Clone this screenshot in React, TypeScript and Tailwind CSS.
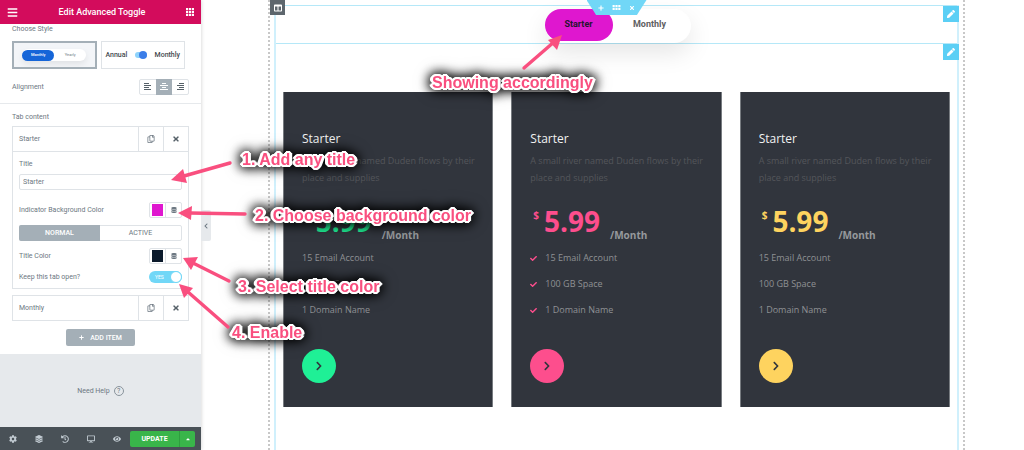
import React from "react";
import {
  FaBars,
  FaCaretUp,
  FaCheck,
  FaChevronLeft,
  FaChevronRight,
  FaCog,
  FaColumns,
  FaDatabase,
  FaDesktop,
  FaEye,
  FaHistory,
  FaLayerGroup,
  FaPen,
  FaPlus,
  FaRegCopy,
  FaTimes,
} from "react-icons/fa";

interface Plan {
  id: number;
  text: string;
  circle: string;
  checked: boolean;
}

const plans: Plan[] = [
  { id: 1, text: "text-[#1ff096]", circle: "bg-[#1ff096]", checked: false },
  { id: 2, text: "text-[#fd4e8d]", circle: "bg-[#fd4e8d]", checked: true },
  { id: 3, text: "text-[#fed35f]", circle: "bg-[#fed35f]", checked: false },
];

const features = ["15 Email Account", "100 GB Space", "1 Domain Name"];

const Dots = ({ rows, className }: { rows: number; className: string }) => (
  <svg viewBox={`0 0 11 ${rows * 4 - 1}`} className={className} fill="currentColor">
    {Array.from({ length: rows * 3 }).map((_, i) => (
      <rect key={i} x={(i % 3) * 4} y={Math.floor(i / 3) * 4} width="3" height="3" />
    ))}
  </svg>
);

const AlignIcon = ({ d }: { d: string }) => (
  <svg viewBox="0 0 8 8" className="size-2" fill="none" stroke="currentColor" strokeWidth="1">
    <path d={d} />
  </svg>
);

const ItemHeader = ({ title }: { title: string }) => (
  <div className="flex h-6 items-stretch">
    <button className="flex-1 pl-1.5 text-left">{title}</button>
    <button className="flex w-[25px] items-center justify-center border-l border-[#dfe3e7]" aria-label="Duplicate">
      <FaRegCopy className="size-2" />
    </button>
    <button className="flex w-[25px] items-center justify-center border-l border-[#dfe3e7]" aria-label="Remove">
      <FaTimes className="size-2 text-[#556068]" />
    </button>
  </div>
);

const ColorControl = ({ label, color }: { label: string; color: string }) => (
  <div className="flex h-4 items-center justify-between">
    <span>{label}</span>
    <div className="flex h-4 w-[33px] rounded-xs border border-[#dfe3e7]">
      <button className="flex flex-1 items-center justify-center" aria-label={label}>
        <span className={`h-3 w-[11px] ${color}`} />
      </button>
      <button className="flex w-4 items-center justify-center border-l border-[#dfe3e7]" aria-label="Global colors">
        <FaDatabase className="size-1.5" />
      </button>
    </div>
  </div>
);

const Panel = () => {
  return (
    <aside className="relative z-10 flex w-[201px] shrink-0 flex-col bg-white text-[7px] leading-[10px] text-[#6d7882] shadow-[0_0_4px_rgba(0,0,0,0.2)]">
      <header className="flex h-6 items-center justify-between bg-[#d30c5c] px-[7px] text-white">
        <button aria-label="Menu">
          <FaBars className="size-[11px]" />
        </button>
        <h1 className="text-[9px] font-medium">Edit Advanced Toggle</h1>
        <button aria-label="Widgets">
          <Dots rows={3} className="size-2" />
        </button>
      </header>

      <div className="border-b border-[#e6e9ec] px-3 pb-2">
        <h2>Choose Style</h2>
        <div className="mt-[7px] grid grid-cols-2 gap-1 pr-1">
          <label className="relative flex h-7 items-center justify-center border border-[#a4afb7] bg-[#f3f5f8] outline-1 -outline-offset-2 outline-[#a4afb7]">
            <input type="radio" name="style" defaultChecked className="sr-only" />
            <span className="flex h-3 w-16 items-center rounded-full bg-white text-[4px] leading-none shadow-[0_3px_6px_rgba(0,0,0,0.08)]">
              <span className="flex h-[11px] w-8 items-center justify-center rounded-full bg-[#1565d8] font-medium text-white">
                Monthly
              </span>
              <span className="flex-1 text-center">Yearly</span>
            </span>
          </label>
          <label className="relative flex h-7 items-center justify-between border border-[#dfe3e7] px-1 font-medium text-[#44494e]">
            <input type="radio" name="style" className="sr-only" />
            <span>Annual</span>
            <span className="flex h-1.5 w-3 items-center justify-end rounded-full bg-[#8fd3fb]">
              <span className="size-2 rounded-full bg-[#3b7de8]" />
            </span>
            <span>Monthly</span>
          </label>
        </div>
        <div className="mt-2.5 flex items-center justify-between">
          <span>Alignment</span>
          <div className="flex h-4 w-[50px] items-stretch rounded-xs border border-[#dfe3e7] text-[#556068]">
            <button className="flex flex-1 items-center justify-center" aria-label="Left">
              <AlignIcon d="M0 .5h5M0 2.5h7M0 4.5h5M0 6.5h7" />
            </button>
            <button className="-my-px flex flex-1 items-center justify-center bg-[#a4afb7] text-white" aria-label="Center">
              <AlignIcon d="M2 .5h4M0 2.5h8M2 4.5h4M0 6.5h8" />
            </button>
            <button className="flex flex-1 items-center justify-center" aria-label="Right">
              <AlignIcon d="M3 .5h5M1 2.5h7M3 4.5h5M1 6.5h7" />
            </button>
          </div>
        </div>
      </div>

      <div className="px-3 pt-2 pb-2">
        <h2>Tab content</h2>
        <div className="mt-1 border border-[#dfe3e7]">
          <ItemHeader title="Starter" />
          <div className="border-t border-[#dfe3e7] px-1.5 pt-[7px] pb-[5px]">
            <label htmlFor="tab-title" className="block">
              Title
            </label>
            <input
              id="tab-title"
              defaultValue="Starter"
              className="mt-[5px] block h-4 w-full rounded-xs border border-[#dfe3e7] px-[3px]"
            />
            <div className="mt-3">
              <ColorControl label="Indicator Background Color" color="bg-[#df17cf]" />
            </div>
            <div className="mt-[7px] flex h-4 rounded-xs border border-[#dfe3e7]">
              <button className="-my-px -ml-px flex-1 rounded-l-xs bg-[#a4afb7] font-medium text-white">NORMAL</button>
              <button className="flex-1">ACTIVE</button>
            </div>
            <div className="mt-[7px]">
              <ColorControl label="Title Color" color="bg-[#0b1a2b]" />
            </div>
            <label className="relative mt-[7px] flex h-3 items-center justify-between">
              <span>Keep this tab open?</span>
              <input type="checkbox" defaultChecked className="sr-only" />
              <span className="flex h-3 w-[33px] items-center justify-between rounded-full bg-[#71d7f7] pl-1.5 text-[5px] text-white">
                YES
                <span className="size-3 rounded-full border border-[#71d7f7] bg-white" />
              </span>
            </label>
          </div>
        </div>
        <div className="mt-1.5 border border-[#dfe3e7]">
          <ItemHeader title="Monthly" />
        </div>
        <button className="mx-auto mt-2 flex h-[17px] w-[69px] items-center justify-center gap-1.5 rounded-xs bg-[#a4afb7] font-medium text-white">
          <FaPlus className="size-[5px]" />
          ADD ITEM
        </button>
      </div>

      <div className="flex flex-1 items-center justify-center bg-[#e6e9ec]">
        <a href="#help" className="flex items-center gap-1">
          Need Help
          <span className="flex size-2.5 items-center justify-center rounded-full border border-[#8a949c]">?</span>
        </a>
      </div>

      <footer className="flex h-[23px] items-center bg-[#495157] pr-1.5 text-[#c2cbd2]">
        <div className="flex flex-1 justify-around">
          <button aria-label="Settings">
            <FaCog className="size-2" />
          </button>
          <button aria-label="Navigator">
            <FaLayerGroup className="size-2" />
          </button>
          <button aria-label="History">
            <FaHistory className="size-2" />
          </button>
          <button aria-label="Responsive">
            <FaDesktop className="size-2" />
          </button>
          <button aria-label="Preview">
            <FaEye className="size-2" />
          </button>
        </div>
        <div className="flex h-4 overflow-hidden rounded-xs bg-[#39b54a] font-bold text-white">
          <button className="w-[49px]">UPDATE</button>
          <button className="flex w-4 items-center justify-center border-l border-[#2f9e3f]" aria-label="Save options">
            <FaCaretUp className="size-1.5" />
          </button>
        </div>
      </footer>

      <button
        className="absolute top-[210px] left-full flex h-[31px] w-2.5 items-center justify-center rounded-r-xs bg-[#e6e9ec]"
        aria-label="Hide panel">
        <FaChevronLeft className="size-1.5" />
      </button>
    </aside>
  );
};

const PlanCard = ({ plan }: { plan: Plan }) => {
  return (
    <article className="flex-1 border-x border-[#777b80] bg-[#31353d] pt-[37px] pr-3 pb-6 pl-[18px] font-['Open_Sans',sans-serif]">
      <h2 className="text-[12px] leading-5 text-[#f2f2f2]">Starter</h2>
      <p className="mt-[3px] text-[9px] leading-[17px] text-[#54565b]">A small river named Duden flows by their place and supplies</p>
      <div className="mt-[15px] flex h-11 pl-[3px] font-bold">
        <span className={`mt-1 text-[10px] leading-5 ${plan.text}`}>$</span>
        <span className={`ml-[5px] text-[28px] leading-10 ${plan.text}`}>5.99</span>
        <span className="ml-2.5 self-end pb-0.5 text-[10px] leading-4 text-[#96999c]">/Month</span>
      </div>
      <ul className="text-[9px] leading-[26px] text-[#8f9194]">
        {features.map((feature) => (
          <li key={feature} className="flex items-center">
            {plan.checked && <FaCheck className={`mr-2 size-[7px] ${plan.text}`} />}
            {feature}
          </li>
        ))}
      </ul>
      <a
        href="#plan"
        aria-label="Choose plan"
        className={`mt-[26px] flex size-[34px] items-center justify-center rounded-full text-[#31353d] ${plan.circle}`}>
        <FaChevronRight className="size-2.5" />
      </a>
    </article>
  );
};

const EditHandle = () => (
  <button className="absolute top-0 -right-0.5 flex size-4 items-center justify-center bg-[#5bcff5] text-white" aria-label="Edit widget">
    <FaPen className="size-2" />
  </button>
);

const Canvas = () => {
  return (
    <main className="relative flex min-w-0 flex-1 overflow-hidden bg-white pr-[59px] pl-[67px]">
      <div className="relative flex flex-1 border-x-2 border-dotted border-[#c8c8c8] px-1 pt-[5px]">
        <button
          className="absolute top-0 left-0 z-10 flex size-[15px] items-center justify-center bg-[#5d666d] text-white"
          aria-label="Edit column">
          <FaColumns className="size-2" />
        </button>
        <div className="flex-1 border-x-2 border-[#d0f0fc]">
          <section className="relative flex h-[39px] justify-center border-y border-[#b5e8f8] pt-[3px] pl-0.5">
            <div className="flex h-[34px] w-[146px] rounded-full bg-white font-['Roboto',sans-serif] text-[9px] font-bold shadow-[0_10px_25px_rgba(0,0,0,0.1)]">
              <button className="h-8 w-[68px] rounded-full bg-[#df17cf] text-[#25152f]">Starter</button>
              <button className="flex-1 pr-1 pb-0.5 text-[#5f6062]">Monthly</button>
            </div>
            <EditHandle />
          </section>
          <section className="relative flex gap-[18px] px-[7px] pt-12 pb-[43px]">
            {plans.map((plan) => (
              <PlanCard key={plan.id} plan={plan} />
            ))}
            <EditHandle />
          </section>
        </div>
        <div className="absolute top-0 left-1/2 flex h-[15px] w-[60px] -translate-x-1/2 items-center justify-center gap-2 bg-[#71d7f7] text-white [clip-path:polygon(0_0,100%_0,84%_100%,16%_100%)]">
          <button aria-label="Add section">
            <FaPlus className="size-1.5" />
          </button>
          <button aria-label="Edit section">
            <Dots rows={2} className="h-[5px] w-[9px]" />
          </button>
          <button aria-label="Delete section">
            <FaTimes className="size-1.5" />
          </button>
        </div>
      </div>
    </main>
  );
};

// shared look of the callout labels: pink on a white outline with a dark glow
const calloutClass =
  "absolute whitespace-nowrap text-base leading-5 font-bold text-[#f94f7f] [text-shadow:2px_0_#fff,-2px_0_#fff,0_2px_#fff,0_-2px_#fff,2px_1px_#fff,2px_-1px_#fff,-2px_1px_#fff,-2px_-1px_#fff,1px_2px_#fff,-1px_2px_#fff,1px_-2px_#fff,-1px_-2px_#fff,3px_0_#fff,-3px_0_#fff] [filter:drop-shadow(0_0_6px_#000)_drop-shadow(0_0_5px_rgba(0,0,0,0.6))]";

const Callouts = () => {
  return (
    <div className="pointer-events-none absolute top-0 left-0 z-20 font-['Liberation_Sans',sans-serif]">
      <p className={`${calloutClass} top-[73px] left-[432px]`}>Showing accordingly</p>
      <p className={`${calloutClass} top-[150px] left-[242px]`}>1. Add any title</p>
      <p className={`${calloutClass} top-[206px] left-[255px]`}>2. Choose background color</p>
      <p className={`${calloutClass} top-[277px] left-[238px]`}>3. Select title color</p>
      <p className={`${calloutClass} top-[323px] left-[232px]`}>4. Enable</p>
      <svg width="640" height="360" viewBox="0 0 640 360" className="absolute top-0 left-0 max-w-none" fill="#f94f7f" stroke="#f94f7f">
        <g strokeWidth="3.4" strokeLinecap="round">
          <path d="M230 163 184 176" />
          <path d="M245 214 190 213" />
          <path d="M229 281 193 263" />
          <path d="M228 327 188 292" />
          <path d="M524 68 554 42" />
        </g>
        <g stroke="none">
          <path d="M171 180 183 169 187 183Z" />
          <path d="M178 213 192 206 191 220Z" />
          <path d="M183 258 198 257 191 270Z" />
          <path d="M179 284 193 288 184 298Z" />
          <path d="M562 35 548 40 557 50Z" />
        </g>
      </svg>
    </div>
  );
};

const App = () => {
  return (
    <div className="relative flex min-h-screen bg-white font-['Roboto',sans-serif]">
      <Panel />
      <Canvas />
      <Callouts />
    </div>
  );
};

export default App;
